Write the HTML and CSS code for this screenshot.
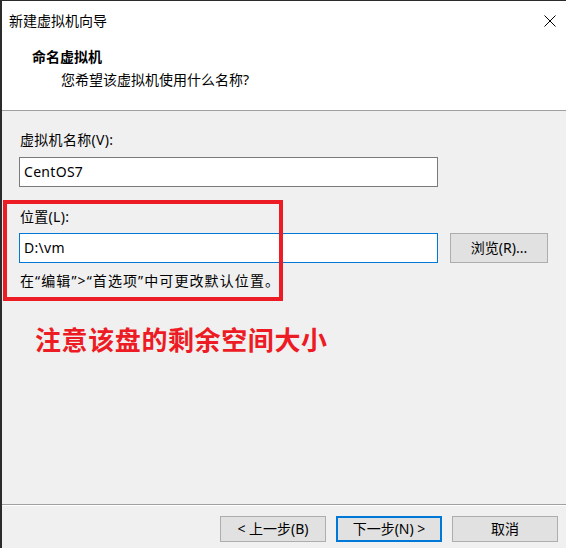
FILE: index.html
```html
<!DOCTYPE html>
<html lang="zh-CN">

<head>
    <meta charset="UTF-8">
    <meta name="viewport" content="width=device-width, initial-scale=1.0">
    <title>新建虚拟机向导</title>
    <link rel="stylesheet" href="styles.css">
</head>

<body>
    <div class="window">
        <div class="titlebar">
            <span class="title">新建虚拟机向导</span>
            <svg class="close" width="12" height="12" viewBox="0 0 12 12">
                <path d="M0.5 0.5 L11.5 11.5 M11.5 0.5 L0.5 11.5" stroke="#000" stroke-width="1" fill="none" />
            </svg>
        </div>
        <div class="header">
            <div class="step">命名虚拟机</div>
            <div class="question">您希望该虚拟机使用什么名称?</div>
        </div>
        <div class="content">
            <div class="label">虚拟机名称(V):</div>
            <div class="field">CentOS7</div>
            <div class="label label2">位置(L):</div>
            <div class="row">
                <div class="field focus">D:\vm</div>
                <div class="btn browse">浏览(R)...</div>
            </div>
            <div class="hint">在“编辑”&gt;“首选项”中可更改默认位置。</div>
            <div class="note">注意该盘的剩余空间大小</div>
            <div class="mark"></div>
        </div>
        <div class="footer">
            <div class="btn">&lt; 上一步(B)</div>
            <div class="btn default">下一步(N) &gt;</div>
            <div class="btn">取消</div>
        </div>
    </div>
</body>

</html>
```

FILE: styles.css
```css
body {
    margin: 0;
    font-family: "Noto Sans", "Noto Sans CJK SC", sans-serif;
    font-size: 14px;
    color: #000;
}

.window {
    position: relative;
    width: 564px;
    height: 547px;
    border-top: 1px solid #2b2b2b;
    border-left: 2px solid #2b2b2b;
    background-color: #f0f0f0;
    display: flex;
    flex-direction: column;
}

.titlebar {
    height: 40px;
    background-color: #fff;
    display: flex;
    align-items: center;
    justify-content: space-between;
    padding: 0 10px 0 7px;
}

.title {
    line-height: 40px;
}

.header {
    background-color: #fff;
    padding: 6px 0 20px 30px;
    border-bottom: 1px solid #a0a0a0;
}

.step {
    font-weight: bold;
    line-height: 20px;
}

.question {
    line-height: 20px;
    margin: 3px 0 0 29px;
}

.content {
    flex: 1;
    padding: 19px 0 0 17px;
}

.label {
    line-height: 20px;
    padding-left: 1px;
    letter-spacing: 0.3px;
}

.label2 {
    margin-top: 20px;
}

.field {
    width: 413px;
    height: 28px;
    line-height: 28px;
    margin-top: 7px;
    padding-left: 4px;
    background-color: #fff;
    border: 1px solid #7a7a7a;
    letter-spacing: 0.3px;
}

.row {
    display: flex;
    align-items: center;
    gap: 12px;
    margin-top: 5px;
}

.row .field {
    margin-top: 0;
}

.focus {
    border-color: #0078d7;
}

.btn {
    box-sizing: border-box;
    width: 106px;
    height: 26px;
    line-height: 24px;
    text-align: center;
    background-color: #e1e1e1;
    border: 1px solid #adadad;
}

.browse {
    width: 98px;
    height: 30px;
    line-height: 28px;
    margin-top: 1px;
}

.hint {
    line-height: 20px;
    margin-top: 8px;
    padding-left: 1px;
    letter-spacing: 1.1px;
}

.note {
    color: #ed1c24;
    font-family: "Noto Sans CJK SC", sans-serif;
    font-weight: bold;
    font-size: 26px;
    letter-spacing: 0.6px;
    line-height: 34px;
    margin: 31px 0 0 16px;
}

/* red annotation frame drawn over the location fields */
.mark {
    position: absolute;
    left: 1px;
    top: 199px;
    width: 272px;
    height: 93px;
    border: 4px solid #ed1c24;
}

.footer {
    height: 44px;
    border-top: 1px solid #a0a0a0;
    box-shadow: inset 0 1px #fff;
    display: flex;
    justify-content: flex-end;
    gap: 10px;
    padding: 11px 8px 0 0;
    box-sizing: border-box;
}

.default {
    border: 2px solid #0078d7;
    line-height: 22px;
}
```
